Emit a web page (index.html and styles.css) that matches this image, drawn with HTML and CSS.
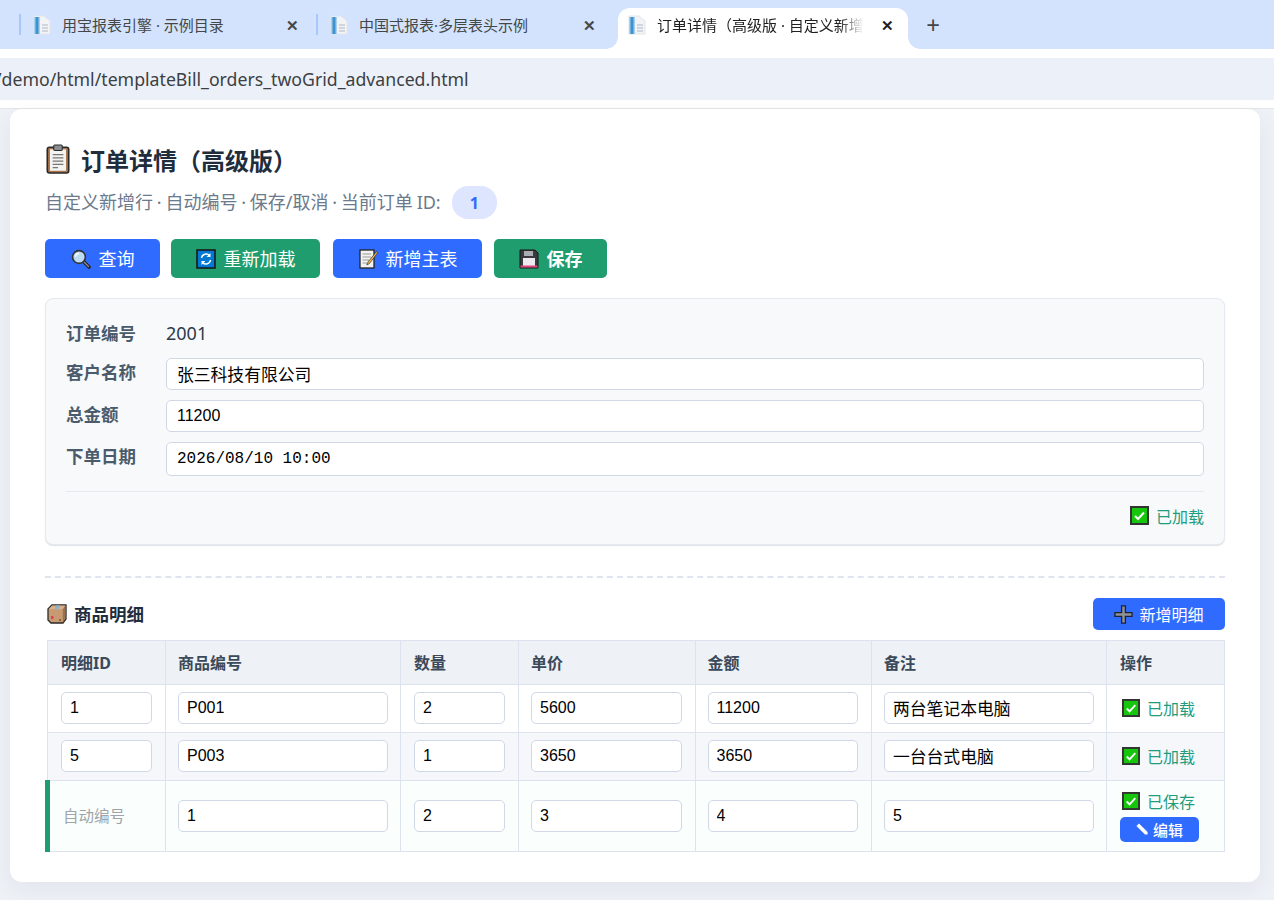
FILE: index.html
```html
<!DOCTYPE html>
<html lang="zh-CN">
<head>
  <meta charset="UTF-8">
  <meta name="viewport" content="width=device-width, initial-scale=1.0">
  <title>订单详情（高级版）</title>
  <link rel="stylesheet" href="styles.css">
</head>
<body>
  <!-- shared icons -->
  <svg class="icon-defs" xmlns="http://www.w3.org/2000/svg">
    <symbol id="i-page" viewBox="0 0 18 20">
      <path d="M1 1H11L17 6V19H1Z" fill="#f1f3f6" stroke="#e2e5ea"/>
      <rect x="1" y="2" width="6" height="17" fill="#a9cfec"/>
      <rect x="2.5" y="2" width="3" height="17" fill="#3d93cf"/>
      <path d="M9 10H15M9 13H15M9 16H15" stroke="#c6ccd3" stroke-width="1.4"/>
    </symbol>
    <symbol id="i-check" viewBox="0 0 19 19">
      <rect x="1" y="1" width="17" height="17" fill="#16c60c" stroke="#333" stroke-width="2"/>
      <path d="M5 10L8 13L14 6.5" fill="none" stroke="#fff" stroke-width="2"/>
    </symbol>
    <symbol id="i-board" viewBox="0 0 24 28">
      <rect x="2" y="3" width="20" height="24" rx="2" fill="#a9744c" stroke="#2a2a2a" stroke-width="1.5"/>
      <rect x="4.5" y="5" width="15" height="20" fill="#f3f3f0"/>
      <rect x="8" y="1" width="8" height="5" rx="1" fill="#8a8f96" stroke="#2a2a2a"/>
      <path d="M7 10H17M7 13H17M7 16H17M7 19H17M7 22H12" stroke="#777" stroke-width="1.2"/>
    </symbol>
    <symbol id="i-search" viewBox="0 0 20 20">
      <path d="M12 12L18 18" stroke="#222" stroke-width="3.6" stroke-linecap="round"/>
      <path d="M13 13L17.5 17.5" stroke="#8a8f96" stroke-width="1.4" stroke-linecap="round"/>
      <circle cx="8" cy="8" r="6.4" fill="#bcdcf5" stroke="#333" stroke-width="1.6"/>
      <path d="M4.5 8A3.5 3.5 0 0 1 8 4.5" fill="none" stroke="#fff" stroke-width="1.4"/>
    </symbol>
    <symbol id="i-reload" viewBox="0 0 20 20">
      <rect x="1" y="1" width="18" height="18" fill="#0078d4" stroke="#1a1a1a" stroke-width="1.6"/>
      <path d="M5.5 9A4.6 4.6 0 0 1 13.5 6.5M14.5 11A4.6 4.6 0 0 1 6.5 13.5" fill="none" stroke="#fff" stroke-width="1.5"/>
      <path d="M14.5 4V8H10.5ZM5.5 16V12H9.5Z" fill="#fff"/>
    </symbol>
    <symbol id="i-memo" viewBox="0 0 20 20">
      <rect x="2" y="1" width="14" height="18" fill="#f2f2f2" stroke="#222" stroke-width="1.3"/>
      <path d="M4.5 5H13M4.5 8H13M4.5 11H11M4.5 14H9" stroke="#999" stroke-width="1.1"/>
      <path d="M18.5 2.5L10 13L8.8 16L11.5 14.5L19.5 4Z" fill="#f5b942" stroke="#333" stroke-width=".7"/>
    </symbol>
    <symbol id="i-save" viewBox="0 0 20 20">
      <path d="M1 1H16L19 4V19H1Z" fill="#3a3a3e" stroke="#161616"/>
      <rect x="5" y="2" width="9" height="5" fill="#a9adb3"/>
      <rect x="4" y="9" width="12" height="9" fill="#eceaf0"/>
      <rect x="1.5" y="16.5" width="17" height="2" fill="#e0457b"/>
    </symbol>
    <symbol id="i-box" viewBox="0 0 20 20">
      <path d="M1 5L5 1H19V15L16 19H4L1 16Z" fill="#c89a72" stroke="#2a2a2a" stroke-width="1.3"/>
      <path d="M1.6 5.2L5.2 1.6H18.4L15.8 5.2Z" fill="#d8b08c"/>
      <path d="M15.8 5.2L18.4 1.6V14.8L15.8 18.4Z" fill="#9d7250"/>
      <path d="M9 1.6H13L11.5 5.2H7.5Z" fill="#8fb2c9"/>
      <rect x="4" y="12" width="2.5" height="3" fill="#d9445a"/>
      <rect x="12" y="15" width="2" height="2" fill="#8c6444"/>
    </symbol>
    <symbol id="i-plus" viewBox="0 0 20 20">
      <path d="M8 1H12V8H19V12H12V19H8V12H1V8H8Z" fill="#8f9296" stroke="#1d2330" stroke-width="1.4"/>
    </symbol>
    <symbol id="i-pencil" viewBox="0 0 14 14">
      <path d="M3.5 0.5L13.5 10.5V13.5H10.5L0.5 3.5Z" fill="#fff"/>
    </symbol>
  </svg>

  <header class="browser">
    <div class="tab-strip">
      <div class="tab">
        <svg class="tab-icon"><use href="#i-page"/></svg>
        <span class="tab-title">用宝报表引擎 · 示例目录</span>
        <span class="tab-close">✕</span>
      </div>
      <div class="tab">
        <svg class="tab-icon"><use href="#i-page"/></svg>
        <span class="tab-title">中国式报表·多层表头示例</span>
        <span class="tab-close">✕</span>
      </div>
      <div class="tab tab-active">
        <svg class="tab-icon"><use href="#i-page"/></svg>
        <span class="tab-title">订单详情（高级版 · 自定义新增行</span>
        <span class="tab-close">✕</span>
      </div>
      <span class="tab-new">+</span>
    </div>
    <div class="address-bar"><span class="address-text">/demo/html/templateBill_orders_twoGrid_advanced.html</span></div>
  </header>

  <main class="page">
    <section class="card">
      <h1 class="title"><svg class="title-icon"><use href="#i-board"/></svg>订单详情（高级版）</h1>
      <p class="subtitle"><span class="subtitle-text">自定义新增行 · 自动编号 · 保存/取消 · 当前订单 ID:</span><span class="id-pill">1</span></p>

      <div class="toolbar">
        <button class="btn btn-blue btn-query"><svg class="btn-icon"><use href="#i-search"/></svg>查询</button>
        <button class="btn btn-green btn-reload"><svg class="btn-icon"><use href="#i-reload"/></svg>重新加载</button>
        <button class="btn btn-blue btn-add"><svg class="btn-icon"><use href="#i-memo"/></svg>新增主表</button>
        <button class="btn btn-green btn-save"><svg class="btn-icon"><use href="#i-save"/></svg><b>保存</b></button>
      </div>

      <div class="master-panel">
        <div class="form-row">
          <label class="form-label">订单编号</label>
          <span class="form-value">2001</span>
        </div>
        <div class="form-row">
          <label class="form-label">客户名称</label>
          <input class="text-input text-cjk" type="text" value="张三科技有限公司">
        </div>
        <div class="form-row">
          <label class="form-label">总金额</label>
          <input class="text-input" type="text" value="11200">
        </div>
        <div class="form-row">
          <label class="form-label">下单日期</label>
          <input class="text-input date-input" type="text" value="2026/08/10 10:00">
        </div>
        <div class="panel-foot">
          <span class="status"><svg class="status-icon"><use href="#i-check"/></svg>已加载</span>
        </div>
      </div>

      <div class="dash-line"></div>

      <div class="section-head">
        <h2 class="section-title"><svg class="section-icon"><use href="#i-box"/></svg>商品明细</h2>
        <button class="btn btn-blue btn-small"><svg class="small-icon"><use href="#i-plus"/></svg>新增明细</button>
      </div>

      <table class="detail-table">
        <colgroup>
          <col class="col-narrow"><col class="col-wide"><col class="col-narrow"><col class="col-mid"><col class="col-mid"><col class="col-wide"><col class="col-narrow">
        </colgroup>
        <thead>
          <tr><th>明细ID</th><th>商品编号</th><th>数量</th><th>单价</th><th>金额</th><th>备注</th><th>操作</th></tr>
        </thead>
        <tbody>
          <tr>
            <td><input class="text-input" type="text" value="1"></td>
            <td><input class="text-input" type="text" value="P001"></td>
            <td><input class="text-input" type="text" value="2"></td>
            <td><input class="text-input" type="text" value="5600"></td>
            <td><input class="text-input" type="text" value="11200"></td>
            <td><input class="text-input text-cjk" type="text" value="两台笔记本电脑"></td>
            <td class="status-td"><span class="status status-cell"><svg class="status-icon"><use href="#i-check"/></svg>已加载</span></td>
          </tr>
          <tr class="row-alt">
            <td><input class="text-input" type="text" value="5"></td>
            <td><input class="text-input" type="text" value="P003"></td>
            <td><input class="text-input" type="text" value="1"></td>
            <td><input class="text-input" type="text" value="3650"></td>
            <td><input class="text-input" type="text" value="3650"></td>
            <td><input class="text-input text-cjk" type="text" value="一台台式电脑"></td>
            <td class="status-td"><span class="status status-cell"><svg class="status-icon"><use href="#i-check"/></svg>已加载</span></td>
          </tr>
          <tr class="row-new">
            <td class="auto-id">自动编号</td>
            <td class="input-cell"><input class="text-input" type="text" value="1"></td>
            <td class="input-cell"><input class="text-input" type="text" value="2"></td>
            <td class="input-cell"><input class="text-input" type="text" value="3"></td>
            <td class="input-cell"><input class="text-input" type="text" value="4"></td>
            <td class="input-cell"><input class="text-input" type="text" value="5"></td>
            <td>
              <span class="status status-cell"><svg class="status-icon"><use href="#i-check"/></svg>已保存</span>
              <button class="btn btn-blue btn-edit"><svg class="edit-icon"><use href="#i-pencil"/></svg>编辑</button>
            </td>
          </tr>
        </tbody>
      </table>
    </section>
  </main>
</body>
</html>
```
FILE: styles.css
```css
* {
  box-sizing: border-box;
}

body {
  margin: 0;
  font-family: "Noto Sans", "Noto Sans CJK SC", sans-serif;
  background-color: #EEF1F6;
  color: #1F2D3D;
}

.icon-defs {
  display: none;
}

/* browser chrome */
.browser {
  background-color: #FFFFFF;
  height: 109px;
  border-bottom: 1px solid #E3E5E8;
}

.tab-strip {
  display: flex;
  align-items: stretch;
  height: 49px;
  padding: 8px 0 0 19px;
  background-color: #D3E3FD;
}

.tab {
  position: relative;
  display: flex;
  align-items: center;
  width: 297px;
  padding: 0 17px 7px 12px;
  font-size: 15px;
  color: #444746;
}

.tab::before {
  content: "";
  position: absolute;
  left: 0;
  top: 6px;
  width: 2px;
  height: 21px;
  background-color: #A8C7FA;
}

.tab-icon {
  width: 18px;
  height: 20px;
  margin-left: 2px;
  flex-shrink: 0;
}

.tab-title {
  margin: 0 0 1px 11px;
  white-space: nowrap;
}

.tab-close {
  margin-left: auto;
  width: 14px;
  font-size: 15px;
  line-height: 14px;
  text-align: center;
  font-weight: 700;
  color: #444746;
}

.tab-active {
  width: 290px;
  margin-left: 5px;
  padding: 0 14px 7px 8px;
  background-color: #FFFFFF;
  border-radius: 12px 12px 0 0;
  color: #1F1F1F;
}

.tab-active::before {
  left: -12px;
  top: auto;
  bottom: 0;
  width: 12px;
  height: 12px;
  background: radial-gradient(circle at 0 0, transparent 11.5px, #FFFFFF 12px);
}

.tab-active::after {
  content: "";
  position: absolute;
  right: -12px;
  bottom: 0;
  width: 12px;
  height: 12px;
  background: radial-gradient(circle at 100% 0, transparent 11.5px, #FFFFFF 12px);
}

.tab-active .tab-title {
  width: 207px;
  overflow: hidden;
  -webkit-mask-image: linear-gradient(to right, #000 88%, transparent);
  mask-image: linear-gradient(to right, #000 88%, transparent);
}

.tab-active .tab-close {
  color: #1F1F1F;
}

.tab-new {
  margin-left: 16px;
  padding-bottom: 7px;
  width: 18px;
  align-self: center;
  font-size: 24px;
  line-height: 28px;
  text-align: center;
  color: #444746;
}

.address-bar {
  display: flex;
  align-items: center;
  height: 42px;
  margin-top: 9px;
  background-color: #ECF0F9;
  overflow: hidden;
}

.address-text {
  margin-left: -5px;
  font-size: 17.7px;
  color: #3C4043;
  white-space: nowrap;
}

/* page */
.page {
  padding: 0 14px 18px 10px;
  height: 791px;
}

.card {
  height: 773px;
  padding: 33px 35px 0;
  background-color: #FFFFFF;
  border-radius: 12px;
  box-shadow: 0 8px 24px rgba(30, 50, 90, 0.06);
}

.title {
  display: flex;
  align-items: center;
  margin: 0;
  height: 34px;
  font-size: 24px;
  font-weight: 700;
  color: #1F2D3D;
}

.title-icon {
  width: 26px;
  height: 30px;
  margin-right: 10px;
}

.subtitle {
  display: flex;
  align-items: center;
  margin: 10px 0 0;
  height: 33px;
  font-size: 18px;
  color: #6B7A8C;
}

.subtitle-text {
  margin-bottom: 3px;
  word-spacing: -0.9px;
  white-space: pre;
}

.id-pill {
  display: flex;
  align-items: center;
  justify-content: center;
  width: 45px;
  height: 33px;
  margin-left: 11px;
  background-color: #DDE5FF;
  border-radius: 16px;
  font-size: 16px;
  font-weight: 700;
  color: #2F6BFF;
}

.toolbar {
  display: flex;
  gap: 12px;
  margin-top: 20px;
}

.btn {
  display: inline-flex;
  align-items: center;
  justify-content: center;
  border: none;
  border-radius: 5px;
  color: #FFFFFF;
  font-family: inherit;
  font-size: 18px;
  cursor: pointer;
  padding: 0;
}

.btn-blue {
  background-color: #2F6BFF;
}

.btn-green {
  background-color: #1F9D6E;
}

.toolbar .btn {
  height: 39px;
  padding-bottom: 2px;
}

.btn-query {
  width: 115px;
}

.toolbar .btn-reload {
  width: 149px;
  margin-left: -1px;
}

.toolbar .btn-add {
  width: 149px;
  margin-left: 1px;
}

.btn-save {
  width: 113px;
}

.btn-icon {
  width: 20px;
  height: 20px;
  margin: 2px 8px 0 0;
}

.master-panel {
  margin-top: 20px;
  height: 247px;
  padding: 20px 20px 0;
  background-color: #F8F9FB;
  border: 1px solid #E6EAF0;
  border-radius: 8px;
  box-shadow: 0 1px 1px rgba(20, 40, 80, 0.14);
}

.form-row {
  display: flex;
  align-items: flex-start;
  margin-bottom: 10px;
}

.form-label {
  width: 100px;
  flex-shrink: 0;
  font-size: 17.5px;
  font-weight: 700;
  line-height: 29px;
  color: #4A5B6C;
}

.form-value {
  font-size: 18px;
  line-height: 29px;
  color: #2C3A4A;
}

.text-input {
  display: block;
  width: 100%;
  height: 32px;
  padding: 0 8px;
  background-color: #FFFFFF;
  border: 1px solid #D0D8E6;
  border-radius: 5px;
  font-family: "Liberation Sans", "Noto Sans CJK SC", sans-serif;
  font-size: 16px;
  color: #000000;
}

.form-row .text-input {
  padding-left: 10px;
}

.text-cjk {
  font-size: 16.8px;
}

.form-row .date-input {
  height: 34px;
  font-family: "Liberation Mono", monospace;
}

.panel-foot {
  display: flex;
  justify-content: flex-end;
  align-items: center;
  height: 48px;
  margin-top: 15px;
  border-top: 1px solid #E6EAF0;
}

.status {
  display: inline-flex;
  align-items: center;
  font-size: 16px;
  color: #1F9D7E;
}

.status-icon {
  width: 19px;
  height: 19px;
  margin-right: 7px;
}

.dash-line {
  margin-top: 31px;
  border-top: 2px dashed #DFE4EF;
}

.section-head {
  display: flex;
  justify-content: space-between;
  align-items: center;
  margin-top: 20px;
  height: 32px;
}

.section-title {
  display: flex;
  align-items: center;
  margin: 0 0 2px;
  font-size: 17.5px;
  font-weight: 700;
  color: #1F2D3D;
}

.section-icon {
  width: 20px;
  height: 20px;
  margin: 2px 7px 0 2px;
}

.btn-small {
  width: 132px;
  height: 32px;
  font-size: 16px;
}

.small-icon {
  width: 19px;
  height: 19px;
  margin-right: 6px;
}

/* detail table */
.detail-table {
  width: 1180px;
  margin-top: 10px;
  border-collapse: collapse;
  table-layout: fixed;
}

.col-narrow {
  width: 118px;
}

.col-wide {
  width: 235px;
}

.col-mid {
  width: 176.5px;
}

.detail-table th,
.detail-table td {
  border: 1px solid #DDE3EE;
  padding: 6px 13px 8px 12px;
  text-align: left;
}

.detail-table th:nth-child(2),
.detail-table th:nth-child(6),
.detail-table td:nth-child(2),
.detail-table td:nth-child(6) {
  padding-right: 12px;
}

.detail-table th:nth-child(1),
.detail-table th:nth-child(3),
.detail-table th:nth-child(7),
.detail-table td:nth-child(1),
.detail-table td:nth-child(3),
.detail-table td:nth-child(7) {
  padding-left: 13px;
}

.detail-table th {
  height: 44px;
  background-color: #EEF1F6;
  font-size: 16px;
  font-weight: 700;
  color: #3A4A5A;
}

.detail-table td {
  height: 48px;
}

.detail-table .status-td {
  padding-top: 8px;
}

.row-alt td {
  background-color: #F5F7FB;
}

.detail-table .row-new td {
  height: 71px;
  background-color: #FAFFFD;
}

.detail-table .row-new .input-cell {
  padding-top: 7px;
  padding-bottom: 7px;
}

.detail-table .auto-id {
  border-left: 5px solid #1F9D6E;
  padding-left: 12px;
  font-size: 15.5px;
  color: #A0A4A8;
}

.status-cell {
  margin-left: 2px;
}

.status-cell .status-icon {
  width: 18px;
  height: 18px;
  margin-right: 7px;
}

.btn-edit {
  width: 79px;
  height: 25px;
  margin-top: 2px;
  font-size: 15px;
  font-weight: 500;
}

.edit-icon {
  width: 12px;
  height: 12px;
  margin-right: 5px;
}
```
